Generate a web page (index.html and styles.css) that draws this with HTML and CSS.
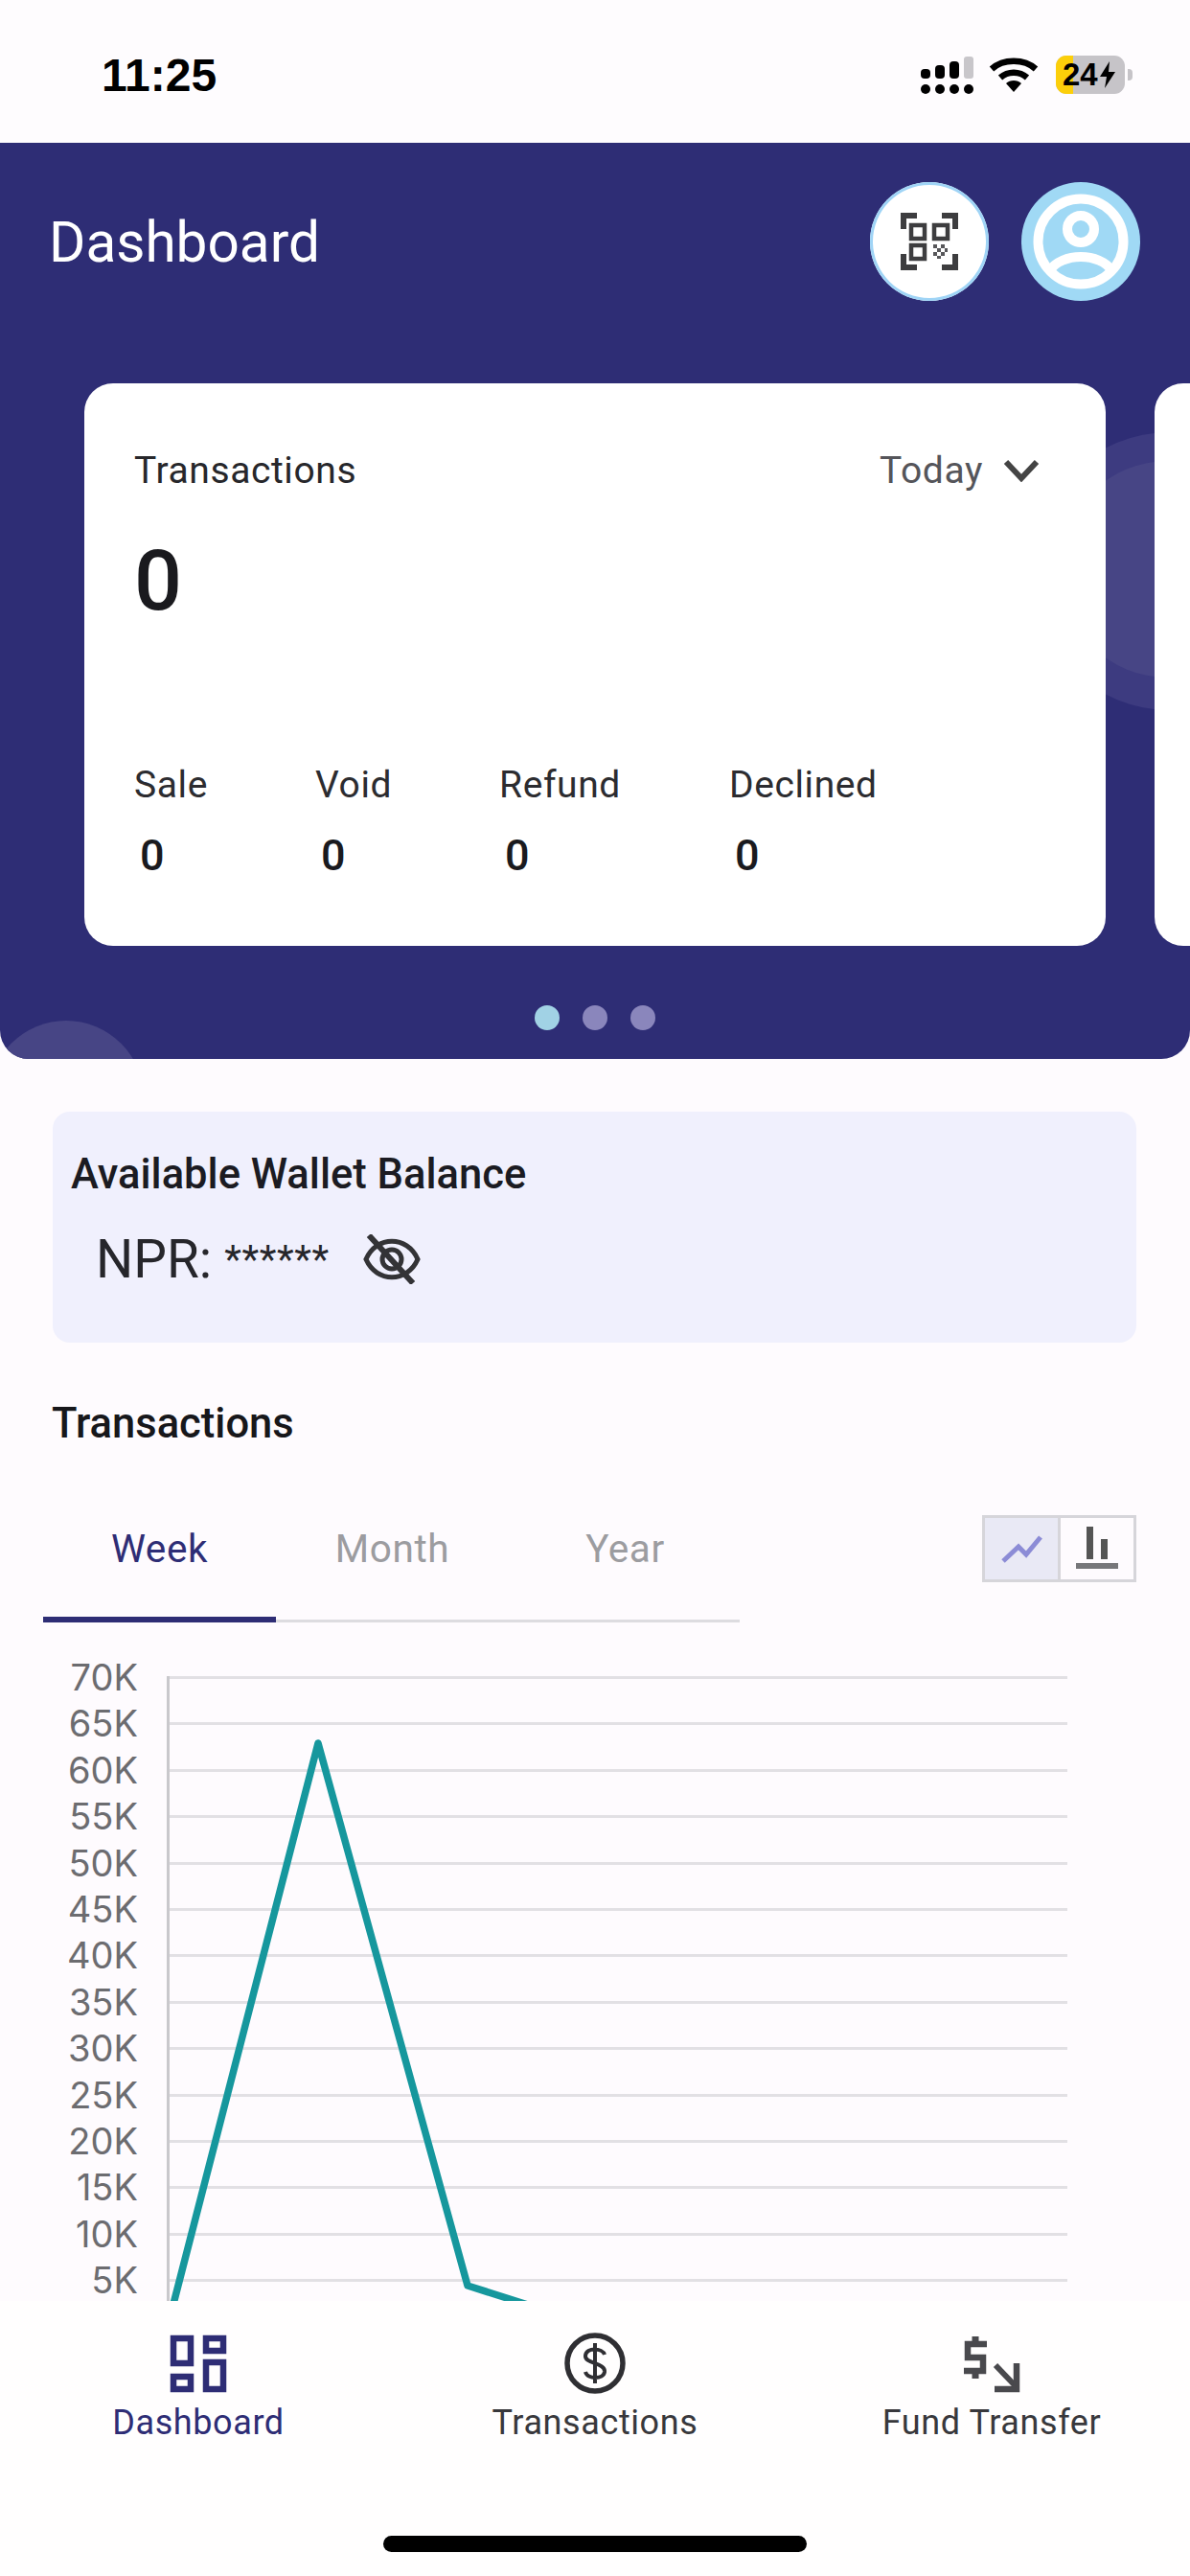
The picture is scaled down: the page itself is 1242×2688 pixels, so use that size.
FILE: index.html
```html
<!DOCTYPE html>
<html lang="en">
<head>
<meta charset="utf-8">
<title>Dashboard</title>
<link rel="stylesheet" href="styles.css">
</head>
<body>
<div class="app">
  <div class="status">
    <span class="time">11:25</span>
    <div class="status-icons">
      <svg class="signal" width="56" height="40" viewBox="0 0 56 40">
        <rect x="0" y="13" width="10" height="10" rx="4" fill="#000"/>
        <rect x="15" y="9" width="10" height="14" rx="4" fill="#000"/>
        <rect x="30" y="5" width="10" height="18" rx="4" fill="#000"/>
        <rect x="45" y="0" width="10" height="23" rx="3" fill="#c8c6ca"/>
        <circle cx="5" cy="34" r="5" fill="#000"/><circle cx="20" cy="34" r="5" fill="#000"/>
        <circle cx="35" cy="34" r="5" fill="#000"/><circle cx="50" cy="34" r="5" fill="#000"/>
      </svg>
      <svg class="wifi" width="52" height="38" viewBox="0 0 52 38" fill="none">
        <path d="M3 13 C15 2 37 2 49 13" stroke="#000" stroke-width="6.5"/>
        <path d="M12 22 C20 15 32 15 40 22" stroke="#000" stroke-width="6.5"/>
        <path d="M18 28 C22 24 30 24 34 28 L26 37 Z" fill="#000"/>
      </svg>
      <div class="battery">
        <span class="battery-fill"></span>
        <span class="battery-text">24</span>
        <svg class="bolt" width="18" height="28" viewBox="0 0 18 28"><path d="M11 0 L1 16 H8 L6 28 L17 11 H10 Z" fill="#000"/></svg>
      </div>
      <span class="battery-nub"></span>
    </div>
  </div>

  <header class="hero">
    <span class="blob blob-a"></span>
    <span class="blob blob-b"></span>
    <span class="blob blob-c"></span>
    <div class="hero-top">
      <h1 class="hero-title">Dashboard</h1>
      <div class="hero-actions">
        <button class="round qr">
          <svg width="60" height="60" viewBox="0 0 60 60" fill="none" stroke="#3d3d3f">
            <path d="M3 17 V3 H17 M43 3 H57 V17 M3 43 V57 H17 M43 57 H57 V43" stroke-width="6"/>
            <rect x="11" y="13" width="14" height="14" stroke-width="4.5"/>
            <rect x="35" y="13" width="14" height="14" stroke-width="4.5"/>
            <rect x="11" y="34" width="14" height="14" stroke-width="4.5"/>
            <path d="M34 33h4v4h-4z M42 33h4v4h-4z M38 37h4v4h-4z M46 37h3v4h-3z M34 41h4v4h-4z M42 41h4v4h-4z M38 45h4v3h-4z" fill="#57575a" stroke="none"/>
          </svg>
        </button>
        <button class="round avatar">
          <svg width="100" height="100" viewBox="0 0 100 100" fill="none" stroke="#fff">
            <circle cx="50" cy="50" r="44.5" stroke-width="10"/>
            <circle cx="50" cy="37" r="14" stroke-width="10"/>
            <path d="M17 81 C30 61 70 61 83 81" stroke-width="10"/>
          </svg>
        </button>
      </div>
    </div>

    <div class="carousel">
      <section class="stat-card">
        <div class="stat-head">
          <span class="stat-title">Transactions</span>
          <span class="stat-range">Today
            <svg width="38" height="24" viewBox="0 0 38 24" fill="none"><path d="M3 3 L19 20 L35 3" stroke="#444" stroke-width="6"/></svg>
          </span>
        </div>
        <div class="stat-total">0</div>
        <div class="stat-cols">
          <div class="stat-col col-sale"><span class="stat-label">Sale</span><span class="stat-value">0</span></div>
          <div class="stat-col col-void"><span class="stat-label">Void</span><span class="stat-value">0</span></div>
          <div class="stat-col col-refund"><span class="stat-label">Refund</span><span class="stat-value">0</span></div>
          <div class="stat-col"><span class="stat-label">Declined</span><span class="stat-value">0</span></div>
        </div>
      </section>
      <section class="stat-card"></section>
    </div>

    <div class="dots">
      <span class="dot dot-on"></span><span class="dot"></span><span class="dot"></span>
    </div>
  </header>

  <main class="content">
    <section class="wallet">
      <h2 class="wallet-title">Available Wallet Balance</h2>
      <div class="wallet-row">
        <span class="wallet-cur">NPR:</span>
        <span class="wallet-mask">******</span>
        <svg class="eye" width="60" height="52" viewBox="0 0 60 52" fill="none" stroke="#333336" stroke-width="5">
          <path d="M3 26 C14 1 46 1 57 26 C46 51 14 51 3 26 Z"/>
          <circle cx="30" cy="26" r="10"/>
          <path d="M6 1 L52 51" stroke-width="6" />
        </svg>
      </div>
    </section>

    <h2 class="section-title">Transactions</h2>

    <div class="tabs-row">
      <div class="tabs">
        <span class="tab tab-on">Week</span>
        <span class="tab">Month</span>
        <span class="tab">Year</span>
      </div>
      <div class="toggle">
        <span class="toggle-btn toggle-on">
          <svg width="44" height="34" viewBox="0 0 44 34" fill="none"><path d="M3 30 L19 15 L27 23 L42 5" stroke="#8c8cd6" stroke-width="5"/></svg>
        </span>
        <span class="toggle-btn">
          <svg width="46" height="46" viewBox="0 0 46 46"><rect x="12" y="0" width="7" height="34" fill="#555"/><rect x="27" y="13" width="7" height="21" fill="#555"/><rect x="1" y="38" width="44" height="6" fill="#77777a"/></svg>
        </span>
      </div>
    </div>

    <div class="chart">
      <div class="y-axis">
        <span>70K</span><span>65K</span><span>60K</span><span>55K</span><span>50K</span>
        <span>45K</span><span>40K</span><span>35K</span><span>30K</span><span>25K</span>
        <span>20K</span><span>15K</span><span>10K</span><span>5K</span>
      </div>
      <div class="plot">
        <div class="grid-line"></div><div class="grid-line"></div><div class="grid-line"></div>
        <div class="grid-line"></div><div class="grid-line"></div><div class="grid-line"></div>
        <div class="grid-line"></div><div class="grid-line"></div><div class="grid-line"></div>
        <div class="grid-line"></div><div class="grid-line"></div><div class="grid-line"></div>
        <div class="grid-line"></div><div class="grid-line"></div>
        <svg class="series" width="937" height="680" viewBox="0 0 937 680" fill="none">
          <path d="M-5 690 L155 70 L311 636 L437 676" stroke="#16979d" stroke-width="7.5" stroke-linejoin="round"/>
        </svg>
      </div>
    </div>
  </main>

  <nav class="tabbar">
    <div class="nav-cols">
      <div class="nav-item nav-on">
        <svg width="60" height="60" viewBox="0 0 60 60" fill="none" stroke="#2e2d75" stroke-width="6.5">
          <rect x="4" y="4" width="18" height="26"/>
          <rect x="38" y="4" width="18" height="13"/>
          <rect x="4" y="44" width="18" height="13"/>
          <rect x="38" y="29" width="18" height="28"/>
        </svg>
        <span class="nav-label">Dashboard</span>
      </div>
      <div class="nav-item">
        <svg width="66" height="66" viewBox="0 0 66 66" fill="none" stroke="#2f2f33">
          <circle cx="33" cy="33" r="29" stroke-width="5.5"/>
          <path d="M43 24 C41 17 24 16 23 25 C22 34 44 32 43 42 C42 50 25 50 23 42 M33 12 V54" stroke-width="4"/>
        </svg>
        <span class="nav-label">Transactions</span>
      </div>
      <div class="nav-item">
        <svg width="62" height="60" viewBox="0 0 62 60" fill="none" stroke="#49494d">
          <path d="M26 10 H6 V24 H22 V38 H2" stroke-width="6.5"/>
          <path d="M14 2 V8 M14 40 V46" stroke-width="7"/>
          <path d="M35 32 L56 54" stroke-width="6"/>
          <path d="M57 30 V57 H34" stroke-width="6.5"/>
        </svg>
        <span class="nav-label">Fund Transfer</span>
      </div>
    </div>
    <div class="home-bar"></div>
  </nav>
</div>
</body>
</html>
```
FILE: styles.css
```css
* { box-sizing: border-box; margin: 0; padding: 0; }
html, body { width: 1242px; height: 2688px; overflow: hidden; background: #fefbfe; }
body { font-family: Roboto, "Noto Sans", sans-serif; color: #1c1b20; }
.app { position: relative; width: 1242px; height: 2688px; overflow: hidden; }

/* status bar */
.status { height: 149px; display: flex; justify-content: space-between; align-items: flex-start; padding: 50px 60px 0 106px; background: #fefcfe; }
.time { font-family: "Liberation Sans", Arial, sans-serif; font-weight: 700; font-size: 48px; line-height: 58px; color: #000; letter-spacing: 0; }
.status-icons { display: flex; align-items: flex-start; margin-top: 8px; }
.signal { margin-top: 1px; }
.wifi { margin: 1px 0 0 15px; }
.battery { position: relative; margin-left: 18px; width: 72px; height: 40px; border-radius: 11px; background: #c6c4c8; overflow: hidden; display: flex; align-items: center; padding-left: 7px; }
.battery-fill { position: absolute; left: 0; top: 0; bottom: 0; width: 18px; background: #fccf0a; }
.battery-text { position: relative; font-family: "Liberation Sans", Arial, sans-serif; font-weight: 700; font-size: 33px; line-height: 40px; color: #000; }
.bolt { position: relative; margin-left: 1px; }
.battery-nub { width: 5px; height: 12px; margin: 14px 0 0 3px; border-radius: 0 4px 4px 0; background: #c6c4c8; }

/* hero */
.hero { position: relative; height: 956px; background: #2e2d75; border-radius: 0 0 30px 30px; overflow: hidden; }
.blob { position: absolute; border-radius: 50%; }
.blob-a { left: 1076px; top: 302px; width: 290px; height: 290px; background: #3d3b80; }
.blob-b { left: 1106px; top: 332px; width: 226px; height: 226px; background: #474585; }
.blob-c { left: -12px; top: 916px; width: 162px; height: 162px; background: #474585; }
.hero-top { position: relative; display: flex; justify-content: space-between; align-items: center; padding: 41px 52px 0 51px; }
.hero-title { font-size: 58.5px; font-weight: 400; height: 124px; line-height: 126px; color: #fff; }
.hero-actions { display: flex; gap: 34px; }
.round { width: 124px; height: 124px; border-radius: 50%; border: 0; display: flex; align-items: center; justify-content: center; }
.qr { background: #fff; box-shadow: inset 0 0 0 3px #9fd4f6; }
.avatar { background: #a0d9f5; }

.carousel { position: relative; display: flex; gap: 51px; padding-left: 88px; margin-top: 86px; width: 1242px; }
.stat-card { flex: 0 0 1066px; height: 587px; background: #fff; border-radius: 30px; padding: 0 52px; }
.stat-head { display: flex; justify-content: space-between; align-items: center; padding-top: 66px; height: 116px; }
.stat-title { font-size: 39px; line-height: 50px; letter-spacing: .6px; color: #27272b; }
.stat-range { display: flex; align-items: center; gap: 21px; font-size: 39px; line-height: 50px; letter-spacing: .6px; color: #55555a; padding-right: 17px; }
.stat-total { font-size: 88px; font-weight: 500; line-height: 104px; margin-top: 38px; color: #1a1a1e; }
.stat-cols { display: flex; margin-top: 137px; }
.stat-col { display: flex; flex-direction: column; padding-right: 0; width: 240px; }
.col-sale { width: 189px; }
.col-void { width: 192px; }
.stat-label { font-size: 39px; line-height: 48px; letter-spacing: .6px; color: #2c2c30; }
.stat-value { font-size: 45px; font-weight: 500; line-height: 56px; margin: 22px 0 0 6px; color: #1a1a1e; }

.dots { position: relative; display: flex; justify-content: center; gap: 24px; margin-top: 62px; }
.dot { width: 26px; height: 26px; border-radius: 50%; background: #8a86bc; }
.dot-on { background: #a1d2e5; }

/* content */
.content { padding: 55px 56px 0 54px; }
.wallet { height: 241px; background: #f0f0fd; border-radius: 18px; padding: 41px 19px 0 19px; margin-left: 1px; }
.wallet-title { font-size: 43.5px; font-weight: 500; line-height: 50px; color: #1b1b22; }
.wallet-row { display: flex; align-items: center; padding-left: 26px; margin-top: 32px; }
.wallet-cur { font-size: 55px; line-height: 62px; color: #26262b; }
.wallet-mask { font-size: 41px; line-height: 62px; margin-left: 13px; letter-spacing: .6px; color: #26262b; }
.eye { margin-left: 35px; }

.section-title { font-size: 43.5px; font-weight: 500; line-height: 50px; margin-top: 60px; color: #17171b; }

.tabs-row { display: flex; justify-content: space-between; align-items: flex-start; margin: 72px 0 0 -9px; }
.tabs { display: flex; width: 727px; border-bottom: 3px solid #dddce0; height: 110px; }
.tab { flex: 0 0 243px; height: 110px; padding-top: 8px; text-align: center; font-size: 40.5px; line-height: 50px; letter-spacing: .6px; color: #9c9ca0; }
.tab-on { color: #2e2d75; border-bottom: 6px solid #2e2d75; }
.toggle { display: flex; width: 161px; height: 70px; border: 3px solid #d6d5da; margin-top: -2px; }
.toggle-btn { flex: 1; display: flex; align-items: center; justify-content: center; }
.toggle-on { background: #e9e9f5; border-right: 3px solid #d6d5da; }

.chart { display: flex; margin: 56px 0 0 0; }
.y-axis { width: 90px; display: flex; flex-direction: column; align-items: flex-end; margin-top: -21px; }
.y-axis span { height: 48.4px; font-family: Inter, Roboto, sans-serif; font-size: 38px; line-height: 44px; color: #6c6c70; }
.plot { position: relative; margin-left: 30px; width: 940px; border-left: 3px solid #c9c8cc; height: 700px; }
.grid-line { height: 48.4px; border-top: 3px solid #e2e0e4; }
.series { position: absolute; left: 0; top: 0; overflow: visible; }

/* bottom nav */
.tabbar { position: absolute; left: 0; right: 0; bottom: 0; height: 287px; background: #fffefe; display: flex; flex-direction: column; align-items: center; }
.nav-cols { display: grid; grid-template-columns: repeat(3, 414px); width: 1242px; padding-top: 32px; }
.nav-item { display: flex; flex-direction: column; align-items: center; height: 120px; }
.nav-item svg { height: 66px; }
.nav-label { font-size: 36px; line-height: 42px; letter-spacing: .6px; margin-top: 8px; color: #38383c; }
.nav-on .nav-label { color: #2e2d75; }
.home-bar { width: 442px; height: 17px; border-radius: 9px; background: #000; margin-top: 93px; }
```
